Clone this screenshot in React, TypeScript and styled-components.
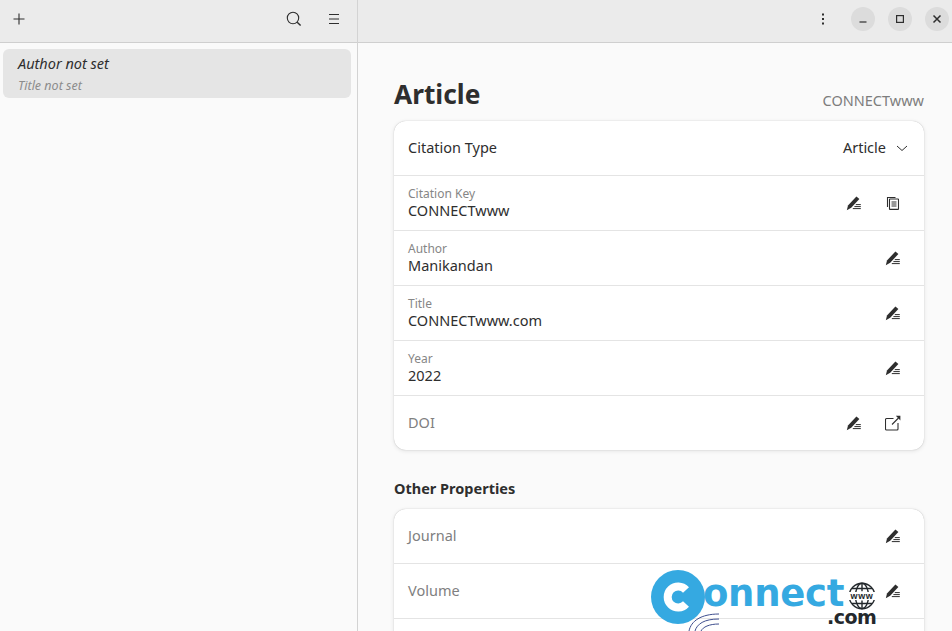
import React from "react";
import styled, { createGlobalStyle } from "styled-components";

const Global = createGlobalStyle`
  html, body { margin: 0; padding: 0; height: 100%; overflow: hidden; }
  body { font-family: "Noto Sans", "Open Sans", sans-serif; background: #fafafa; color: #2e2e2e; }
  #root { height: 100%; }
`;

const Window = styled.div`
  display: grid;
  grid-template-columns: 357px 1fr;
  width: 952px;
  height: 631px;
  position: relative;
  overflow: hidden;
  background: #fafafa;
`;
const Sidebar = styled.aside`
  display: flex;
  flex-direction: column;
  border-right: 1px solid #d3d3d3;
  width: 358px;
  box-sizing: border-box;
`;
const Main = styled.main`
  display: flex;
  flex-direction: column;
  min-width: 0;
  margin-left: 1px;
  overflow: hidden;
`;
const Header = styled.header`
  height: 43px;
  flex: none;
  box-sizing: border-box;
  background: #ebebeb;
  border-bottom: 1px solid #cfcfcf;
  display: flex;
  align-items: center;
  color: #2e2e2e;
`;
const SideHeader = styled(Header)`
  justify-content: space-between;
  padding: 0 15px 4px 11px;
`;
const MainHeader = styled(Header)`
  justify-content: flex-end;
  padding: 0 3px 4px 0;
`;
const IconSlot = styled.span<{ $w?: number }>`
  width: ${(p) => p.$w ?? 16}px;
  height: 16px;
  display: inline-flex;
  align-items: center;
  justify-content: center;
  flex: none;
`;
const HeaderRight = styled.div`
  display: flex;
  align-items: center;
  gap: 24px;
`;
const WinButton = styled.span`
  width: 24px;
  height: 24px;
  border-radius: 50%;
  background: #dcdcdc;
  display: inline-flex;
  align-items: center;
  justify-content: center;
  margin-left: 13px;
`;
const MenuSlot = styled(IconSlot)`
  margin-right: 7px;
`;
const SideList = styled.div`
  padding: 6px 6px 0 3px;
`;
const SelectedRow = styled.div`
  height: 49px;
  box-sizing: border-box;
  background: #e5e5e5;
  border-radius: 6px;
  padding: 4px 15px 0;
  display: flex;
  flex-direction: column;
`;
const RowAuthor = styled.span`
  font-size: 14.5px;
  line-height: 20px;
  font-style: italic;
  color: #2e2e2e;
`;
const RowTitle = styled.span`
  font-size: 12.5px;
  line-height: 17px;
  margin-top: 4px;
  font-style: italic;
  color: #8c8c8c;
`;
const Content = styled.div`
  padding: 34px 28px 0 36px;
`;
const TitleRow = styled.div`
  display: flex;
  justify-content: space-between;
  align-items: flex-end;
  height: 44px;
`;
const PageTitle = styled.h1`
  margin: 0 0 9px;
  font-size: 26.3px;
  line-height: 36px;
  font-weight: 700;
  color: #2e2e2e;
`;
const KeyLabel = styled.span`
  font-size: 14.5px;
  line-height: 20px;
  color: #7d7d7d;
  margin-bottom: 11px;
`;
const Card = styled.section`
  background: #fff;
  border-radius: 12px;
  box-shadow: 0 0 1px rgba(0, 0, 0, 0.28), 0 1px 4px rgba(0, 0, 0, 0.1);
  overflow: hidden;
`;
const Row = styled.div<{ $h?: number }>`
  height: ${(p) => p.$h ?? 55}px;
  box-sizing: border-box;
  padding: 0 23px 0 14px;
  display: flex;
  align-items: center;
  justify-content: space-between;
  & + & { border-top: 1px solid #e4e4e4; }
`;
const Stack = styled.div`
  display: flex;
  flex-direction: column;
`;
const Small = styled.span`
  font-size: 12px;
  line-height: 16px;
  color: #868686;
`;
const Value = styled.span`
  font-size: 14.5px;
  line-height: 16px;
  margin-bottom: 2px;
  color: #2e2e2e;
`;
const Plain = styled.span`
  font-size: 14.5px;
  padding-bottom: 2px;
  color: #2e2e2e;
`;
const Empty = styled.span`
  font-size: 14.5px;
  padding-bottom: 2px;
  color: #808080;
`;
const Actions = styled.div`
  display: flex;
  align-items: center;
  gap: 23px;
`;
const TypePick = styled.div`
  display: flex;
  align-items: center;
  gap: 10px;
  margin-right: -7px;
`;
const GroupTitle = styled.h2`
  margin: 28px 0 11px;
  font-size: 14.5px;
  line-height: 20px;
  font-weight: 700;
  color: #2e2e2e;
`;
const Watermark = styled.div`
  position: absolute;
  left: 651px;
  top: 570px;
  width: 230px;
  height: 61px;
  pointer-events: none;
`;
const WmCircle = styled.svg`
  position: absolute;
  left: 0;
  top: 0;
`;
const WmWord = styled.span`
  position: absolute;
  left: 52px;
  top: 1px;
  font-family: "DejaVu Sans", sans-serif;
  font-weight: 700;
  font-size: 37px;
  line-height: 46px;
  letter-spacing: -0.3px;
  color: #35a9e1;
`;
const WmCom = styled.span`
  position: absolute;
  left: 176px;
  top: 34px;
  font-family: "DejaVu Sans", sans-serif;
  font-weight: 700;
  font-size: 19px;
  line-height: 26px;
  letter-spacing: -0.5px;
  color: #23282c;
`;
const WmGlobe = styled.svg`
  position: absolute;
  left: 197px;
  top: 12px;
`;
const WmWaves = styled.svg`
  position: absolute;
  left: 36px;
  top: 43px;
`;

const Plus = () => (
  <svg width="14" height="14" viewBox="0 0 14 14" fill="none" stroke="#2e2e2e" strokeWidth="1.1">
    <path d="M7 1.5v11M1.5 7h11" />
  </svg>
);
const Search = () => (
  <svg width="16" height="16" viewBox="0 0 16 16" fill="none" stroke="#2e2e2e" strokeWidth="1.1">
    <circle cx="7" cy="7" r="5.7" />
    <path d="M11.2 11.2l3.4 3.4" strokeWidth="1.4" />
  </svg>
);
const Burger = () => (
  <svg width="12" height="12" viewBox="0 0 12 12" fill="none" stroke="#2e2e2e" strokeWidth="1">
    <path d="M1 1.5h10M1 6h10M1 10.5h10" />
  </svg>
);
const Dots = () => (
  <svg width="4" height="12" viewBox="0 0 4 12" fill="#2e2e2e">
    <rect x="1" y="0.5" width="2" height="2" />
    <rect x="1" y="5" width="2" height="2" />
    <rect x="1" y="9.5" width="2" height="2" />
  </svg>
);
const Minimize = () => (
  <svg width="10" height="10" viewBox="0 0 10 10" fill="none" stroke="#2e2e2e" strokeWidth="1.2">
    <path d="M1.5 8h7" />
  </svg>
);
const Maximize = () => (
  <svg width="10" height="10" viewBox="0 0 10 10" fill="none" stroke="#2e2e2e" strokeWidth="1.2">
    <rect x="1.6" y="1.6" width="6.8" height="6.8" />
  </svg>
);
const Close = () => (
  <svg width="10" height="10" viewBox="0 0 10 10" fill="none" stroke="#2e2e2e" strokeWidth="1.5">
    <path d="M1.5 1.5l7 7M8.5 1.5l-7 7" />
  </svg>
);
const Chevron = () => (
  <svg width="12" height="8" viewBox="0 0 12 8" fill="none" stroke="#2e2e2e" strokeWidth="1">
    <path d="M1 2l5 4.5L11 2" />
  </svg>
);
const Pen = () => (
  <svg width="16" height="16" viewBox="0 0 16 16" fill="none">
    <path d="M0.8 15.2l1.2-4.6 8.4-9.2 3 2.6-8.2 8.8z" fill="#2e2e2e" />
    <path d="M9.8 9.6h5M8.4 11.6h6.4M6.8 13.6h8" stroke="#2e2e2e" strokeWidth="1" />
  </svg>
);
const Copy = () => (
  <svg width="14" height="14" viewBox="0 0 14 14" fill="none" stroke="#2e2e2e" strokeWidth="1.1">
    <path d="M1.5 11V1.5h8" />
    <rect x="3.5" y="3" width="9" height="10.4" rx="0.5" />
    <path d="M5.5 6h5M5.5 8h5M5.5 10h5" />
  </svg>
);
const External = () => (
  <svg width="16" height="16" viewBox="0 0 16 16" fill="none" stroke="#2e2e2e" strokeWidth="1.1">
    <path d="M8.5 3.5H1.5a1 1 0 0 0-1 1V14a1 1 0 0 0 1 1H12a1 1 0 0 0 1-1V8" />
    <path d="M7 9.5l6.5-6.5" />
    <path d="M10.8 0.8h4.6v4.6z" fill="#2e2e2e" stroke="none" />
  </svg>
);

type Field = { label: string; value: string; extra?: React.ReactNode };
const fields: Field[] = [
  { label: "Citation Key", value: "CONNECTwww", extra: <Copy /> },
  { label: "Author", value: "Manikandan" },
  { label: "Title", value: "CONNECTwww.com" },
  { label: "Year", value: "2022" },
];

const Watermarked = () => (
  <Watermark>
    <WmCircle width="56" height="56" viewBox="0 0 56 56">
      <circle cx="27" cy="27" r="27" fill="#35a9e1" />
      <path d="M35 20a10.5 10.5 0 1 0 0 14" fill="none" stroke="#fff" strokeWidth="8" />
    </WmCircle>
    <WmWord>onnect</WmWord>
    <WmGlobe width="28" height="28" viewBox="0 0 28 28" fill="none" stroke="#23282c" strokeWidth="1.4">
      <circle cx="14" cy="14" r="12.8" />
      <ellipse cx="14" cy="14" rx="6.5" ry="12.8" />
      <path d="M14 1.2v8M14 18.5v8.3M4 6.5h20M4 21.5h20" />
      <rect x="0" y="10" width="28" height="8" fill="#fff" stroke="none" />
      <text x="14" y="17" textAnchor="middle" fontFamily="Liberation Sans, sans-serif" fontSize="9" fontWeight="700" fill="#23282c" stroke="none" letterSpacing="0.6">
        www
      </text>
    </WmGlobe>
    <WmCom>.com</WmCom>
    <WmWaves width="36" height="18" viewBox="0 0 36 18" fill="none" stroke="#3f4f8f" strokeWidth="1">
      <path d="M2 18C4 8 14 1 32 1" />
      <path d="M8 18C10 11 17 6 32 6" />
      <path d="M14 18C16 14 22 11 32 11" />
    </WmWaves>
  </Watermark>
);

export default function App() {
  return (
    <>
      <Global />
      <Window>
        <Sidebar>
          <SideHeader>
            <IconSlot><Plus /></IconSlot>
            <HeaderRight>
              <IconSlot><Search /></IconSlot>
              <IconSlot><Burger /></IconSlot>
            </HeaderRight>
          </SideHeader>
          <SideList>
            <SelectedRow>
              <RowAuthor>Author not set</RowAuthor>
              <RowTitle>Title not set</RowTitle>
            </SelectedRow>
          </SideList>
        </Sidebar>
        <Main>
          <MainHeader>
            <MenuSlot><Dots /></MenuSlot>
            <WinButton><Minimize /></WinButton>
            <WinButton><Maximize /></WinButton>
            <WinButton><Close /></WinButton>
          </MainHeader>
          <Content>
            <TitleRow>
              <PageTitle>Article</PageTitle>
              <KeyLabel>CONNECTwww</KeyLabel>
            </TitleRow>
            <Card>
              <Row $h={54}>
                <Plain>Citation Type</Plain>
                <TypePick>
                  <Plain>Article</Plain>
                  <Chevron />
                </TypePick>
              </Row>
              {fields.map((f) => (
                <Row key={f.label}>
                  <Stack>
                    <Small>{f.label}</Small>
                    <Value>{f.value}</Value>
                  </Stack>
                  <Actions>
                    <IconSlot><Pen /></IconSlot>
                    {f.extra && <IconSlot>{f.extra}</IconSlot>}
                  </Actions>
                </Row>
              ))}
              <Row>
                <Empty>DOI</Empty>
                <Actions>
                  <IconSlot><Pen /></IconSlot>
                  <IconSlot><External /></IconSlot>
                </Actions>
              </Row>
            </Card>
            <GroupTitle>Other Properties</GroupTitle>
            <Card>
              <Row $h={54}>
                <Empty>Journal</Empty>
                <IconSlot><Pen /></IconSlot>
              </Row>
              <Row>
                <Empty>Volume</Empty>
                <IconSlot><Pen /></IconSlot>
              </Row>
              <Row />
            </Card>
          </Content>
        </Main>
        <Watermarked />
      </Window>
    </>
  );
}
